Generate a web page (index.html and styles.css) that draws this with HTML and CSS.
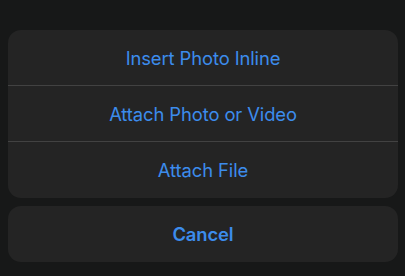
FILE: index.html
```html
<!DOCTYPE html>
<html>
<head>
<meta charset="utf-8">
<link rel="stylesheet" href="styles.css">
</head>
<body>
<div class="sheet">
  <div class="group">
    <div class="action">Insert Photo Inline</div>
    <div class="action">Attach Photo or Video</div>
    <div class="action last">Attach File</div>
  </div>
  <div class="group">
    <div class="action cancel">Cancel</div>
  </div>
</div>
</body>
</html>
```
FILE: styles.css
```css
html, body {
  margin: 0;
  padding: 0;
  background: #171818;
  width: 405px;
  height: 276px;
  overflow: hidden;
}
.sheet {
  padding: 30px 7px 0 8px;
  display: flex;
  flex-direction: column;
  gap: 8px;
  font-family: Inter, "Noto Sans", sans-serif;
}
.group {
  background: #242424;
  border-radius: 13px;
  overflow: hidden;
}
.action {
  height: 55px;
  display: flex;
  align-items: center;
  justify-content: center;
  color: #3c8cec;
  font-size: 18.4px;
  letter-spacing: -0.1px;
}
.action + .action {
  border-top: 1px solid #424242;
}
.action.last { height: 56px; }
.cancel {
  height: 56px;
  font-weight: 600;
}
```
